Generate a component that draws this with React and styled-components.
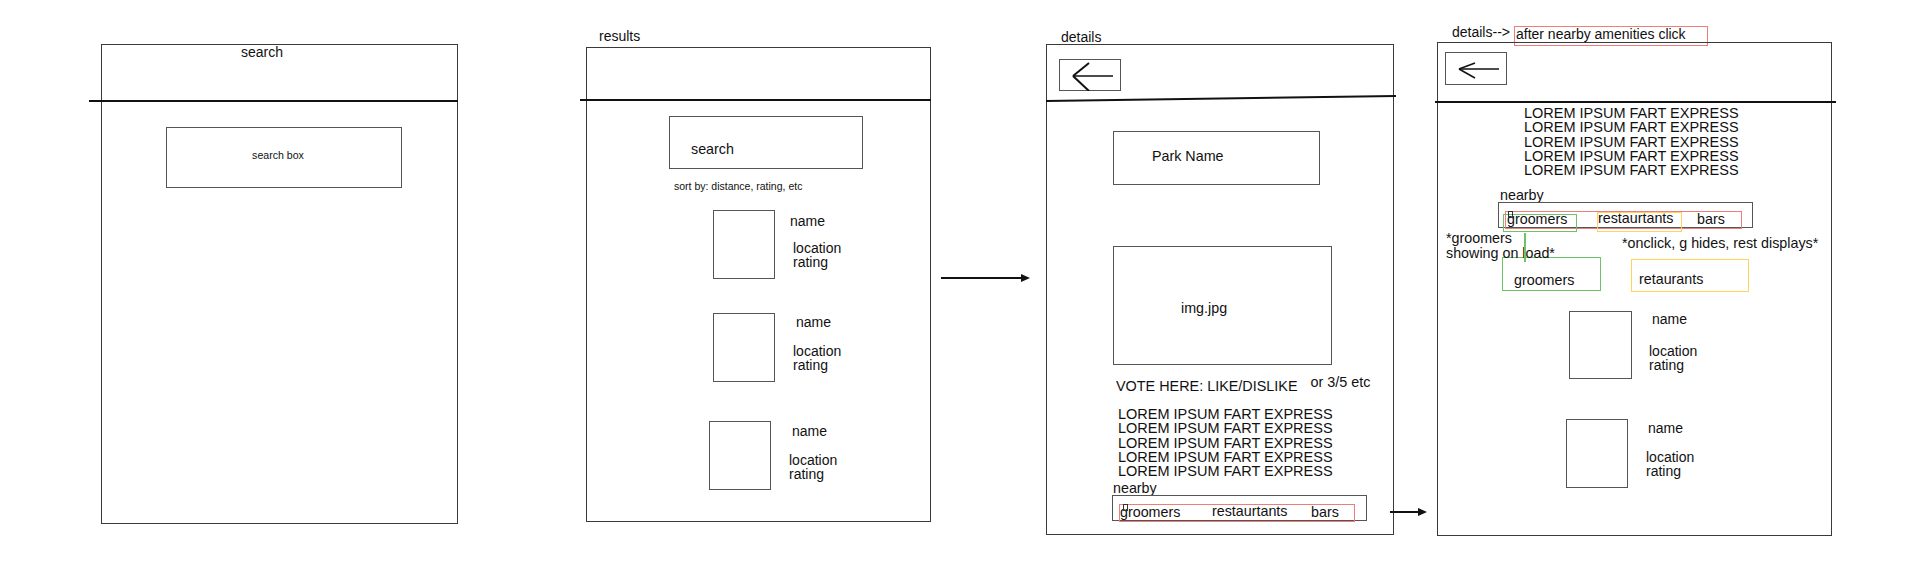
import React from "react";
import styled, { createGlobalStyle } from "styled-components";

const Global = createGlobalStyle`
  html, body { margin: 0; padding: 0; background: #fff; }
  body {
    font-family: "Liberation Sans", Arial, sans-serif;
    color: #111;
    font-size: 14px;
  }
`;

const RED = "#ee7f78";
const GREEN = "#6cc36a";
const YELLOW = "#ffd25e";

/* ---------- page / canvas ---------- */

const Canvas = styled.main`
  display: flex;
  align-items: flex-start;
  width: 1919px;
  height: 562px;
  box-sizing: border-box;
  padding-left: 101px;
  background: #fff;
  overflow: hidden;
`;

const Column = styled.div`
  flex: none;
  display: flex;
  flex-direction: column;
  width: ${(p) => p.$w}px;
  margin-left: ${(p) => p.$ml || 0}px;
  margin-top: ${(p) => p.$mt}px;
`;

const ScreenCaption = styled.div`
  padding-left: ${(p) => p.$pl}px;
  font-size: 14px;
  line-height: 16px;
  white-space: nowrap;
`;

const CaptionRow = styled.div`
  display: flex;
  align-items: flex-start;
  gap: 4px;
  padding-left: 15px;
  white-space: nowrap;
`;

const CaptionTag = styled.span`
  font-size: 14px;
  line-height: 16px;
`;

const CaptionNote = styled.span`
  box-sizing: border-box;
  width: 194px;
  height: 20px;
  margin-top: 2px;
  border: 1px solid ${RED};
  padding-left: 1px;
  font-size: 14px;
  line-height: 14px;
`;

const Frame = styled.section`
  display: flex;
  flex-direction: column;
  height: ${(p) => p.$h}px;
  margin-top: ${(p) => p.$mt || 0}px;
  box-shadow: inset 0 0 0 1px #3a3a3a;
`;

const Header = styled.header`
  flex: none;
  box-sizing: border-box;
  display: flex;
  align-items: flex-start;
  height: ${(p) => p.$h}px;
  margin-left: ${(p) => -(p.$out || 0)}px;
  margin-right: ${(p) => -(p.$outR || 0)}px;
  padding-left: ${(p) => p.$pl || 0}px;
  padding-top: ${(p) => p.$pt || 0}px;
  border-bottom: ${(p) => (p.$line ? "2px solid #111" : "none")};
`;

const HeaderTitle = styled.h1`
  margin: 0;
  font-weight: normal;
  font-size: 14px;
  line-height: 16px;
`;

const SlantLine = styled.svg`
  display: block;
  flex: none;
  overflow: visible;
`;

const Body = styled.div`
  display: flex;
  flex-direction: column;
  align-items: flex-start;
  padding-left: ${(p) => p.$pl || 0}px;
`;

/* ---------- parts ---------- */

const Shift = styled.div`
  margin-left: ${(p) => p.$ml || 0}px;
  margin-top: ${(p) => p.$mt || 0}px;
`;

const SearchBox = styled(Shift)`
  display: flex;
  align-items: center;
  justify-content: center;
  width: 236px;
  height: 61px;
  box-sizing: border-box;
  padding-right: 12px;
  padding-bottom: 5px;
  box-shadow: inset 0 0 0 1px #555;
  font-size: 10.6px;
`;

const TextBox = styled(Shift)`
  box-sizing: border-box;
  width: ${(p) => p.$w}px;
  height: ${(p) => p.$h}px;
  padding-left: ${(p) => p.$px}px;
  padding-top: ${(p) => p.$py}px;
  box-shadow: inset 0 0 0 1px #555;
  font-size: 14.3px;
  line-height: 16px;
  white-space: nowrap;
`;

const SortHint = styled(Shift)`
  font-size: 10.5px;
  line-height: 14px;
  white-space: nowrap;
`;

const BackButton = styled.button`
  flex: none;
  width: 62px;
  height: ${(p) => p.$h}px;
  padding: 0;
  margin: 0;
  border: none;
  background: transparent;
  box-shadow: inset 0 0 0 1px #555;
  svg { display: block; }
`;

const ResultItem = styled(Shift)`
  display: flex;
  align-items: flex-start;
`;

const Thumb = styled.div`
  flex: none;
  width: ${(p) => p.$w}px;
  height: ${(p) => p.$h}px;
  box-shadow: inset 0 0 0 1px #555;
`;

const Meta = styled.div`
  display: flex;
  flex-direction: column;
  margin-left: ${(p) => p.$gap}px;
  padding-top: ${(p) => p.$pad}px;
  font-size: 14px;
  white-space: nowrap;
`;

const ItemName = styled.span`
  line-height: 16px;
  margin-left: ${(p) => p.$indent}px;
`;

const ItemInfo = styled.span`
  line-height: 14.5px;
  margin-top: ${(p) => p.$gap || 0}px;
`;

const Lorem = styled(Shift)`
  font-size: 14.5px;
  line-height: 14.3px;
  white-space: nowrap;
`;

const LoremLine = styled.div``;

const VoteRow = styled(Shift)`
  display: flex;
  align-items: flex-start;
  gap: 13px;
  font-size: 14.4px;
  line-height: 16px;
  white-space: nowrap;
`;

const VotePrompt = styled.span`
  padding-top: 4px;
`;

const RatingNote = styled.span``;

const SectionLabel = styled(Shift)`
  font-size: 14.3px;
  line-height: 16px;
`;

const NearbyBar = styled(Shift)`
  position: relative;
  width: 255px;
  height: 26px;
  box-sizing: border-box;
  padding-top: 8px;
  padding-left: ${(p) => p.$pl}px;
  box-shadow: inset 0 0 0 1px #555;
`;

const TabRow = styled.div`
  display: grid;
  grid-template-columns: ${(p) => p.$cols};
  font-size: 14.3px;
  line-height: 16px;
  white-space: nowrap;
`;

const Tab = styled.span`
  position: relative;
  padding-top: ${(p) => (p.$low ? 1 : 0)}px;
  &::before {
    content: "";
    display: ${(p) => (p.$glyph ? "block" : "none")};
    position: absolute;
    left: ${(p) => p.$glyph}px;
    top: 1px;
    width: 3px;
    height: 5px;
    border: 1px solid #333;
  }
`;

/* annotation boxes drawn over the tab bar */
const Mark = styled.span`
  position: absolute;
  left: ${(p) => p.$x}px;
  top: ${(p) => p.$y}px;
  width: ${(p) => p.$w}px;
  height: ${(p) => p.$h}px;
  box-sizing: border-box;
  border: 1px solid ${(p) => p.$color};
  pointer-events: none;
`;

const NotesRow = styled(Shift)`
  position: relative;
  display: grid;
  grid-template-columns: 176px auto;
  padding-left: 9px;
  font-size: 14.3px;
  line-height: 15px;
  white-space: nowrap;
`;

const Note = styled.p`
  margin: 0;
  padding-top: ${(p) => p.$pt || 0}px;
`;

/* connector from the green tab down to the groomers panel */
const Stem = styled.span`
  position: absolute;
  left: 87px;
  top: 2px;
  width: 2px;
  height: 29px;
  background: ${GREEN};
`;

const CategoryRow = styled(Shift)`
  display: flex;
  align-items: flex-start;
  gap: 30px;
`;

const Category = styled.div`
  box-sizing: border-box;
  width: ${(p) => p.$w}px;
  height: ${(p) => p.$h}px;
  margin-top: ${(p) => p.$mt || 0}px;
  border: 1px solid ${(p) => p.$color};
  padding-left: ${(p) => p.$px}px;
  padding-top: ${(p) => p.$py}px;
  font-size: 14.3px;
  line-height: 16px;
  white-space: nowrap;
`;

const Connector = styled.svg`
  flex: none;
  display: block;
  margin-left: ${(p) => p.$ml}px;
  margin-top: ${(p) => p.$mt}px;
  overflow: visible;
`;

/* ---------- helpers ---------- */

const LOREM = Array.from({ length: 5 }, () => "LOREM IPSUM FART EXPRESS");

function Result({ ml, mt, w = 62, h = 69, nameDx, nameDy, locDx, locDy }) {
  const pad = nameDy - 8;
  const gap = locDy - 7.25 - (nameDy - 8 + 16);
  return (
    <ResultItem $ml={ml} $mt={mt}>
      <Thumb $w={w} $h={h} />
      <Meta $gap={locDx - w} $pad={pad}>
        <ItemName $indent={nameDx - locDx}>name</ItemName>
        <ItemInfo $gap={gap}>location</ItemInfo>
        <ItemInfo>rating</ItemInfo>
      </Meta>
    </ResultItem>
  );
}

function Arrow({ ml, mt, len }) {
  return (
    <Connector $ml={ml} $mt={mt} width={len} height={10}>
      <line x1="0" y1="5" x2={len - 7} y2="5" stroke="#111" strokeWidth="2" />
      <polygon points={`${len - 9},1 ${len},5 ${len - 9},9`} fill="#111" />
    </Connector>
  );
}

function BackArrow({ h, headTop, headBottom, weight = 1.5 }) {
  return (
    <svg width="62" height={h}>
      <line x1="14" y1="17" x2="54" y2="17" stroke="#111" strokeWidth="1.5" />
      <line x1="14" y1="17" x2="30" y2={headTop} stroke="#111" strokeWidth={weight} />
      <line x1="14" y1="17" x2="30" y2={headBottom} stroke="#111" strokeWidth={weight} />
    </svg>
  );
}

function LoremBlock(props) {
  return (
    <Lorem {...props}>
      {LOREM.map((t, i) => (
        <LoremLine key={i}>{t}</LoremLine>
      ))}
    </Lorem>
  );
}

export default function App() {
  return (
    <>
      <Global />
      <Canvas>
        {/* Screen 1: search */}
        <Column $w={357} $mt={44}>
          <Frame $h={480}>
            <Header $h={58} $line $out={12} $pl={152}>
              <HeaderTitle>search</HeaderTitle>
            </Header>
            <Body $pl={65}>
              <SearchBox $mt={25}>search box</SearchBox>
            </Body>
          </Frame>
        </Column>

        {/* Screen 2: results */}
        <Column $w={345} $ml={128} $mt={28}>
          <ScreenCaption $pl={13}>results</ScreenCaption>
          <Frame $h={475} $mt={3}>
            <Header $h={54} $line $out={6} />
            <Body $pl={83}>
              <TextBox $mt={15} $w={194} $h={53} $px={22} $py={25}>search</TextBox>
              <SortHint $ml={5} $mt={10}>sort by: distance, rating, etc</SortHint>
              <Result ml={44} mt={17} nameDx={77} nameDy={11} locDx={80} locDy={38} />
              <Result ml={44} mt={34} nameDx={83} nameDy={9} locDx={80} locDy={38} />
              <Result ml={40} mt={39} nameDx={83} nameDy={10} locDx={80} locDy={39} />
            </Body>
          </Frame>
        </Column>

        <Arrow ml={10} mt={273} len={89} />

        {/* Screen 3: details */}
        <Column $w={348} $ml={16} $mt={29}>
          <ScreenCaption $pl={15}>details</ScreenCaption>
          <Frame $h={491} $mt={-1}>
            <Header $h={50} $pl={13} $pt={15}>
              <BackButton $h={32} aria-label="back">
                <BackArrow h={32} headTop={4} headBottom={32} weight={2} />
              </BackButton>
            </Header>
            <SlantLine width="352" height="8">
              <line x1="0" y1="7" x2="350" y2="2" stroke="#111" strokeWidth="2" />
            </SlantLine>
            <Body $pl={67}>
              <TextBox $mt={29} $w={207} $h={54} $px={39} $py={17}>Park Name</TextBox>
              <TextBox $mt={61} $w={219} $h={119} $px={68} $py={54}>img.jpg</TextBox>
              <VoteRow $ml={3} $mt={9}>
                <VotePrompt>VOTE HERE: LIKE/DISLIKE</VotePrompt>
                <RatingNote>or 3/5 etc</RatingNote>
              </VoteRow>
              <LoremBlock $ml={5} $mt={13} />
              <SectionLabel $mt={1.5}>nearby</SectionLabel>
              <NearbyBar $ml={-1} $mt={-1} $pl={8}>
                <Mark $x={7} $y={9} $w={236} $h={18} $color={RED} />
                <TabRow $cols="92px 99px auto">
                  <Tab $low $glyph={3}>groomers</Tab>
                  <Tab>restaurtants</Tab>
                  <Tab $low>bars</Tab>
                </TabRow>
              </NearbyBar>
            </Body>
          </Frame>
        </Column>

        <Arrow ml={-4} mt={507} len={37} />

        {/* Screen 4: details after nearby amenities click */}
        <Column $w={395} $ml={10} $mt={24}>
          <CaptionRow>
            <CaptionTag>details--&gt;</CaptionTag>
            <CaptionNote>after nearby amenities click</CaptionNote>
          </CaptionRow>
          <Frame $h={494} $mt={-4}>
            <Header $h={61} $line $out={2} $outR={4} $pl={10} $pt={10}>
              <BackButton $h={33} aria-label="back">
                <BackArrow h={33} headTop={11} headBottom={26} />
              </BackButton>
            </Header>
            <Body>
              <LoremBlock $ml={87} $mt={3} />
              <SectionLabel $ml={63} $mt={9.5}>nearby</SectionLabel>
              <NearbyBar $ml={61} $mt={-1} $pl={9}>
                <Mark $x={7} $y={9} $w={237} $h={18} $color={RED} />
                <Mark $x={5} $y={12} $w={74} $h={18} $color={GREEN} />
                <Mark $x={99} $y={10} $w={85} $h={20} $color={YELLOW} />
                <TabRow $cols="91px 99px auto">
                  <Tab $low $glyph={1}>groomers</Tab>
                  <Tab>restaurtants</Tab>
                  <Tab $low>bars</Tab>
                </TabRow>
              </NearbyBar>
              <NotesRow $mt={3}>
                <Stem />
                <Note>
                  *groomers
                  <br />
                  showing on load*
                </Note>
                <Note $pt={5}>*onclick, g hides, rest displays*</Note>
              </NotesRow>
              <CategoryRow $ml={65} $mt={-4}>
                <Category $w={99} $h={34} $color={GREEN} $px={11} $py={14}>
                  groomers
                </Category>
                <Category $w={118} $h={33} $mt={2} $color={YELLOW} $px={7} $py={11}>
                  retaurants
                </Category>
              </CategoryRow>
              <Result ml={132} mt={19} w={63} h={68} nameDx={83} nameDy={8} locDx={80} locDy={40} />
              <Result ml={129} mt={40} nameDx={82} nameDy={9} locDx={80} locDy={38} />
            </Body>
          </Frame>
        </Column>
      </Canvas>
    </>
  );
}
